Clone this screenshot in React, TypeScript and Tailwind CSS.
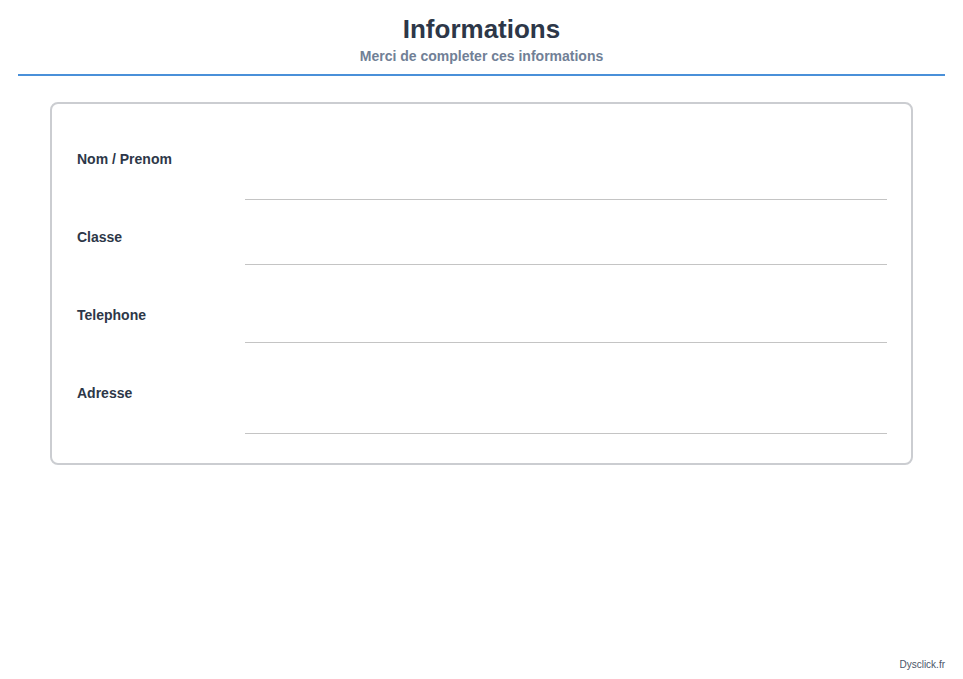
export default function App() {
  const rows = [
    { l: "Nom / Prenom", mt: "mt-[29px]", h: "h-[80px]" },
    { l: "Classe", mt: "mt-[27px]", h: "h-[65px]" },
    { l: "Telephone", mt: "mt-[40px]", h: "h-[78px]" },
    { l: "Adresse", mt: "mt-[40px]", h: "h-[91px]" },
  ];
  return (
    <div className="w-[963px] h-[679px] bg-white relative" style={{ fontFamily: "'Liberation Sans', Arial, sans-serif" }}>
      <div className="mx-[18px] pt-[14px] border-b-2 border-[#4a90d9] h-[76px] text-center">
        <div className="text-[26px] leading-[30px] font-bold text-[#2d3748]">Informations</div>
        <div className="text-[14px] leading-[18px] mt-[3px] font-bold text-[#718096]">Merci de completer ces informations</div>
      </div>
      <div className="mx-[50px] mt-[26px] border-2 border-[#cbcdd1] rounded-[8px] pt-[16px] pb-[29px] pl-[25px] pr-[24px]">
        {rows.map((r) => (
          <div key={r.l} className="flex items-start">
            <div className={`w-[168px] ${r.mt} text-[14px] leading-[20px] font-bold text-[#2d3748]`}>{r.l}</div>
            <div className={`flex-1 ${r.h} border-b border-[#c4c4c4]`} />
          </div>
        ))}
      </div>
      <div className="absolute right-[18px] bottom-[7px] text-[10px] text-[#4a5568]">Dysclick.fr</div>
    </div>
  );
}
